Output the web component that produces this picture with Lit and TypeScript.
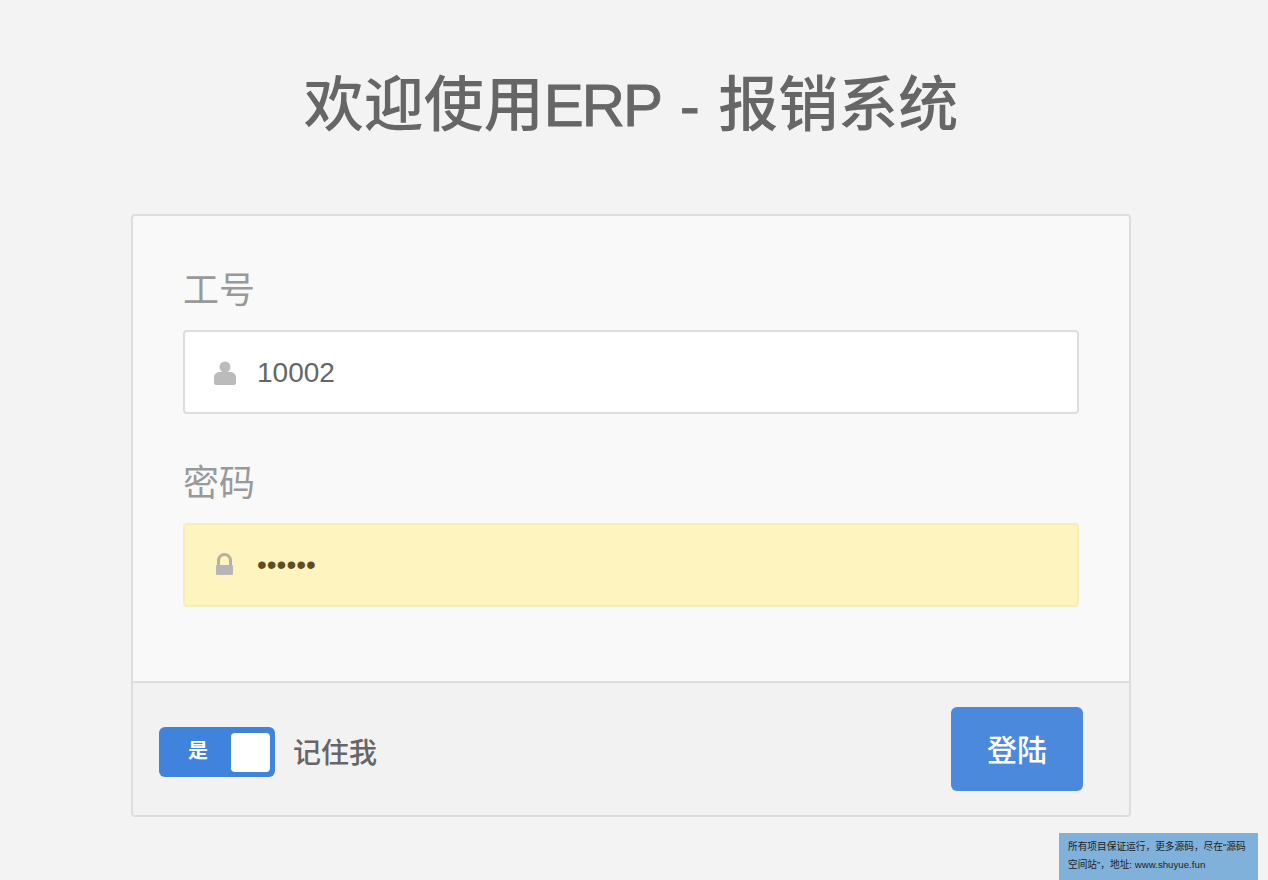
import { LitElement, html, css } from "lit";
import { customElement } from "lit/decorators.js";

@customElement("app-root")
export class AppRoot extends LitElement {
  static styles = css`
    :host {
      display: block;
      position: relative;
      height: 880px;
      overflow: hidden;
      background: #f3f3f3;
      font-family: "Liberation Sans", "Noto Sans CJK SC", sans-serif;
      color: #666;
    }
    h1 {
      margin: 0 0 0 131px;
      width: 1000px;
      padding-top: 71px;
      height: 214px;
      box-sizing: border-box;
      font-size: 60px;
      line-height: 70px;
      font-weight: 500;
      text-align: center;
      color: #666;
    }
    .latin {
      letter-spacing: -2px;
      -webkit-text-stroke: 0.8px #666;
    }
    .dash {
      margin: 0 2px;
      -webkit-text-stroke: 0.8px #666;
    }
    .card {
      box-sizing: border-box;
      width: 1000px;
      height: 603px;
      margin-left: 131px;
      border: 2px solid #ddd;
      border-radius: 4px;
      display: flex;
      flex-direction: column;
      background: #f9f9f9;
    }
    .body {
      flex: 1;
      padding: 51px 50px 0;
    }
    label {
      display: block;
      height: 63px;
      font-size: 36px;
      line-height: 48px;
      color: #999;
    }
    .field {
      box-sizing: border-box;
      height: 84px;
      margin-bottom: 46px;
      border: 2px solid #ddd;
      border-radius: 4px;
      background: #fff;
      display: flex;
      align-items: center;
      padding-left: 28px;
      gap: 20px;
      font-size: 28px;
      color: #666;
    }
    .field.auto {
      background: #fef4c0;
      border-color: #f8edb8;
      color: #5f4d20;
    }
    .field svg {
      width: 24px;
      height: 26px;
      flex: none;
    }
    .value {
      margin-top: 2px;
    }
    .foot {
      box-sizing: border-box;
      height: 134px;
      border-top: 2px solid #ddd;
      background: #f2f2f2;
      border-radius: 0 0 3px 3px;
      display: flex;
      align-items: center;
      padding: 0 46px 0 26px;
    }
    .switch {
      box-sizing: border-box;
      width: 116px;
      height: 50px;
      margin-top: 6px;
      border-radius: 6px;
      background: #3f83dc;
      display: flex;
      align-items: center;
      padding-left: 29px;
      color: #fff;
      font-size: 20px;
      font-weight: 700;
      line-height: 44px;
    }
    .switch span {
      width: 20px;
      margin-top: -2px;
    }
    .knob {
      width: 39px;
      height: 39px;
      margin-left: 23px;
      background: #fff;
      border-radius: 4px;
    }
    .remember {
      margin: 4px 0 0 18px;
      font-size: 28px;
      font-weight: 500;
      color: #666;
    }
    button {
      margin-left: auto;
      width: 132px;
      height: 84px;
      border: 0;
      border-radius: 6px;
      background: #4a89dc;
      color: #fff;
      font: inherit;
      font-size: 30px;
      font-weight: 500;
      padding: 0 0 3px;
    }
    .note {
      position: absolute;
      left: 1059px;
      top: 833px;
      width: 199px;
      height: 47px;
      box-sizing: border-box;
      padding: 5px 9px 0;
      background: #7fb1da;
      color: #222;
      font-size: 9.7px;
      line-height: 18px;
    }
  `;

  render() {
    return html`
      <h1>欢迎使用<span class="latin">ERP</span> <span class="dash">-</span> 报销系统</h1>
      <div class="card">
        <div class="body">
          <label>工号</label>
          <div class="field">
            <svg viewBox="0 0 24 26" fill="#bbb">
              <circle cx="12" cy="8" r="5.5"></circle>
              <path d="M1 18c0-3 3-5 6-5h10c3 0 6 2 6 5v6c0 1-1 2-2 2H3c-1 0-2-1-2-2z"></path>
            </svg>
            <span class="value">10002</span>
          </div>
          <label>密码</label>
          <div class="field auto">
            <svg viewBox="0 0 24 26">
              <path d="M5.5 14V8.5a6 6 0 0 1 12 0V14" fill="none" stroke="#b5b0a0" stroke-width="3"></path>
              <rect x="3" y="13" width="17" height="10" rx="1" fill="#b8b5b8"></rect>
            </svg>
            <span>••••••</span>
          </div>
        </div>
        <div class="foot">
          <div class="switch"><span>是</span><div class="knob"></div></div>
          <div class="remember">记住我</div>
          <button>登陆</button>
        </div>
      </div>
      <div class="note">所有项目保证运行，更多源码，尽在“源码空间站”，地址: www.shuyue.fun</div>
    `;
  }
}
